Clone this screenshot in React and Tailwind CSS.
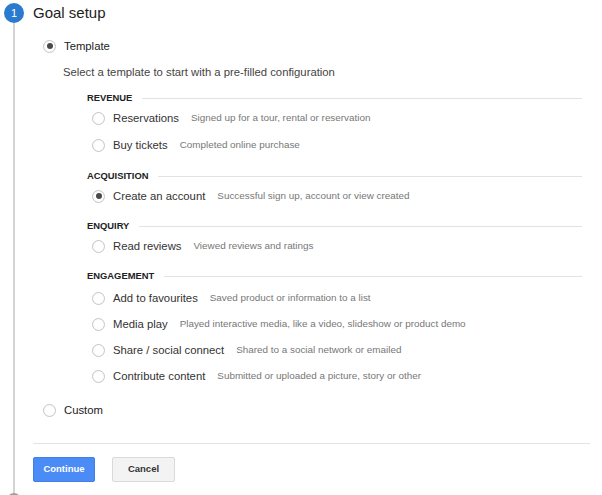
import React from "react";

const sections = [
  {
    name: "REVENUE",
    items: [
      { label: "Reservations", desc: "Signed up for a tour, rental or reservation" },
      { label: "Buy tickets", desc: "Completed online purchase" },
    ],
  },
  {
    name: "ACQUISITION",
    items: [{ label: "Create an account", desc: "Successful sign up, account or view created", checked: true }],
  },
  {
    name: "ENQUIRY",
    items: [{ label: "Read reviews", desc: "Viewed reviews and ratings" }],
  },
  {
    name: "ENGAGEMENT",
    items: [
      { label: "Add to favourites", desc: "Saved product or information to a list" },
      { label: "Media play", desc: "Played interactive media, like a video, slideshow or product demo" },
      { label: "Share / social connect", desc: "Shared to a social network or emailed" },
      { label: "Contribute content", desc: "Submitted or uploaded a picture, story or other" },
    ],
  },
];

function Radio({ checked }) {
  return (
    <span className="w-[13px] h-[13px] rounded-full border border-[#c6c6c6] bg-white flex items-center justify-center shrink-0 shadow-[inset_0_0_1px_rgba(0,0,0,0.1)]">
      {checked && <span className="w-[6px] h-[6px] rounded-full bg-[#4a4a4a]" />}
    </span>
  );
}

export default function App() {
  return (
    <div className="h-[495px] w-[602px] overflow-hidden bg-white font-['Liberation_Sans',Arial,sans-serif]">
      <div className="flex h-[507px] pt-[3px] pl-[4px]">
        {/* step rail */}
        <div className="w-[20px] flex flex-col items-center shrink-0">
          <div className="w-[20px] h-[20px] rounded-full bg-[#2a7bd0] text-white text-[11px] flex items-center justify-center">
            1
          </div>
          <div className="w-[2px] flex-1 bg-[#d4d4d4]" />
          <div className="w-[14px] h-[14px] rounded-full bg-[#9e9e9e]" />
        </div>

        <div className="flex-1 ml-[9px] mr-[12px]">
          <div className="h-[20px] flex items-center text-[15px] text-[#222]">Goal setup</div>

          <div className="mt-[16px] ml-[10px] h-[14px] flex items-center gap-[8px]">
            <Radio checked />
            <span className="text-[11.3px] text-[#222]">Template</span>
          </div>

          <div className="mt-[12px] ml-[30px] h-[14px] flex items-center text-[11.3px] text-[#444]">
            Select a template to start with a pre-filled configuration
          </div>

          <div className="mt-[12px] ml-[54px] mr-[8px] flex flex-col gap-[10px]">
            {sections.map((s, i) => (
              <div key={s.name}>
                <div className="h-[14px] flex items-center gap-[10px]">
                  <span className="text-[9.4px] font-bold text-[#222]">{s.name}</span>
                  <span className="flex-1 h-px bg-[#e2e2e2]" />
                </div>
                <div className={i === 3 ? "mt-[2px]" : ""}>
                  {s.items.map((it) => (
                    <div
                      key={it.label}
                      className={`${i === 0 ? "h-[27px]" : "h-[26px]"} flex items-center pl-[5px]`}
                    >
                      <Radio checked={it.checked} />
                      <span className="ml-[8px] text-[11.3px] text-[#333]">{it.label}</span>
                      <span className="ml-[12px] text-[9.9px] text-[#777]">{it.desc}</span>
                    </div>
                  ))}
                </div>
              </div>
            ))}
          </div>

          <div className="mt-[14px] ml-[10px] h-[14px] flex items-center gap-[8px]">
            <Radio />
            <span className="text-[11.3px] text-[#222]">Custom</span>
          </div>

          <div className="mt-[26px] h-px bg-[#e4e4e4]" />

          <div className="mt-[13px] flex gap-[17px]">
            <button className="w-[62px] h-[25px] rounded-[2px] bg-[#4a8bf5] border border-[#3f7fe6] text-white text-[9.5px] font-bold">
              Continue
            </button>
            <button className="w-[63px] h-[25px] rounded-[2px] bg-[#f3f3f3] border border-[#dadada] text-[#333] text-[9.5px] font-bold">
              Cancel
            </button>
          </div>
        </div>
      </div>
    </div>
  );
}
